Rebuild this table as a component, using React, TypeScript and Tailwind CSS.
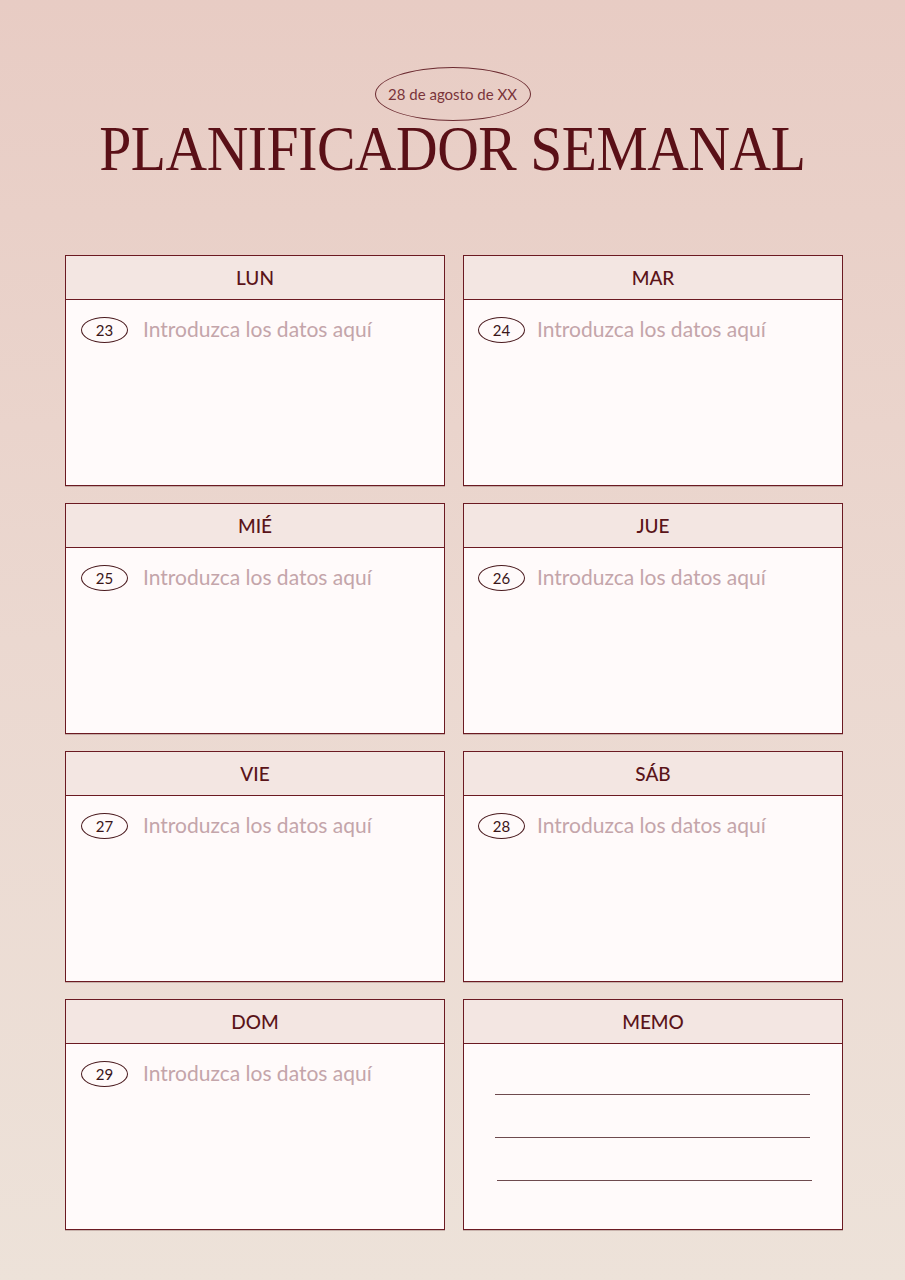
const days = [
  { label: "LUN", num: "23" },
  { label: "MAR", num: "24" },
  { label: "MIÉ", num: "25" },
  { label: "JUE", num: "26" },
  { label: "VIE", num: "27" },
  { label: "SÁB", num: "28" },
  { label: "DOM", num: "29" },
];

function CardHeader({ label }: { label: string }) {
  return (
    <div className="flex h-[44px] items-center justify-center border-b border-[#6b1a22] bg-[#f3e6e2] pt-[2px] text-[19px] font-medium text-[#5a1419]">
      {label}
    </div>
  );
}

function DayCard({ label, num, right }: { label: string; num: string; right: boolean }) {
  return (
    <div className="flex h-[231px] flex-col border border-[#6b1a22] bg-[#fffafa] shadow-[0_1px_0_rgba(90,40,40,0.25)]">
      <CardHeader label={label} />
      <div className={right ? "flex items-start gap-[12px] px-[14px] pt-[17px]" : "flex items-start gap-[15px] px-[15px] pt-[17px]"}>
        <div className="flex h-[26px] w-[47px] shrink-0 items-center justify-center rounded-[50%] border border-[#4a1a1e] text-[15px] text-[#3a1518]">
          {num}
        </div>
        <span className="-mt-[2px] text-[21px] leading-[28px] text-[#c4a5aa]">
          Introduzca los datos aquí
        </span>
      </div>
    </div>
  );
}

function MemoCard() {
  return (
    <div className="flex h-[231px] flex-col border border-[#6b1a22] bg-[#fffafa] shadow-[0_1px_0_rgba(90,40,40,0.25)]">
      <CardHeader label="MEMO" />
      <div className="flex flex-col gap-[42px] pt-[50px]">
        <div className="ml-[31px] h-px w-[315px] bg-[#6e4a4e]" />
        <div className="ml-[31px] h-px w-[315px] bg-[#6e4a4e]" />
        <div className="ml-[33px] h-px w-[315px] bg-[#6e4a4e]" />
      </div>
    </div>
  );
}

export default function App() {
  return (
    <div className="h-[1280px] w-[905px] overflow-hidden bg-gradient-to-b from-[#e8ccc4] via-[#ebd8d0] to-[#ede2d9] font-['Lato','Noto_Sans',sans-serif]">
      <div className="flex flex-col items-center pt-[67px]">
        <div className="flex h-[54px] w-[156px] items-center justify-center rounded-[50%] border border-[#6b2a30] text-[15px] text-[#7a343a]">
          28 de agosto de XX
        </div>
        <h1 className="-mt-[10px] scale-x-[0.9] font-['Liberation_Serif',serif] text-[64px] leading-[76px] tracking-[-0.5px] text-[#5a1017]">
          PLANIFICADOR SEMANAL
        </h1>
      </div>
      <div className="ml-[65px] mt-[68px] grid grid-cols-[380px_380px] gap-x-[18px] gap-y-[17px]">
        {days.map((d, i) => (
          <DayCard key={d.label} label={d.label} num={d.num} right={i % 2 === 1} />
        ))}
        <MemoCard />
      </div>
    </div>
  );
}
